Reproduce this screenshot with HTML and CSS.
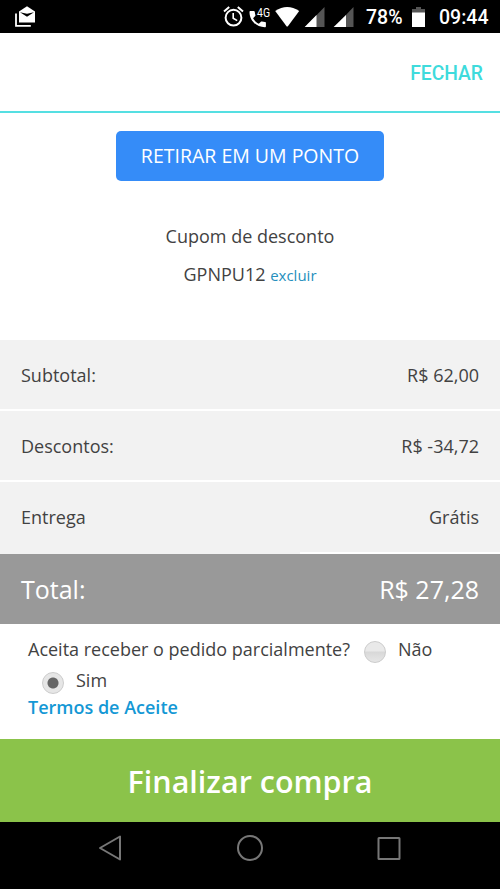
FILE: index.html
```html
<!DOCTYPE html>
<html lang="pt-BR">
<head>
<meta charset="utf-8">
<title>Carrinho</title>
<link rel="stylesheet" href="styles.css">
</head>
<body>
<div class="status">
  <svg class="mail" width="22" height="22" viewBox="0 0 22 22"><path d="M2 7.500v12.300h14.800" fill="none" stroke="#fff" stroke-width="1.800"/><path fill="#fff" d="M5 5.600L13 .2l8 5.400V16.500H5z"/><path d="M6 6.200L13 7.800l7-1.600-7 4.600z" fill="#000"/></svg>
  <svg class="signals" width="132" height="24" viewBox="0 0 132 24">
    <g fill="none" stroke="#fff" stroke-width="2"><circle cx="10.5" cy="13.7" r="7.900"/><path d="M10.2 9v5.200l4 2.400" stroke-width="1.600"/><path d="M1 7.500l5.200-4.400M14.800 3.100l5.200 4.400"/></g>
    <path fill="#fff" d="M27.500 7h3.300c.500 0 .9.400 1 .9.100 1.100.300 2.200.600 3.200.1.400 0 .700-.2 1l-2.100 2.100c1.400 2.500 3.100 4.300 5.700 5.600l2.100-2.100c.300-.3.700-.4 1.100-.2 1 .3 1.900.500 2.900.500.600 0 1 .4 1 1v3.200c0 .6-.4 1-1 1C33.200 23.200 26.500 16.500 26.500 8c0-.6.4-1 1-1z"/>
    <text class="net" x="34" y="13" textLength="13" lengthAdjust="spacingAndGlyphs">4G</text>
    <path fill="#fff" d="M52.200 7Q64.200-1 76.200 7L64.700 22.600h-1z"/>
    <path fill="#555" d="M101.500 3v20H82z"/><path fill="#fff" d="M93.500 11v12H81.700z"/>
    <path fill="#555" d="M130.500 3v20h-19z"/><path fill="#fff" d="M123 11v12h-12.300z"/>
  </svg>
  <span class="pct">78%</span>
  <svg class="battery" width="13" height="20" viewBox="0 0 13 20"><path fill="#555" d="M4 0h5v2h4v5H0V2h4z"/><path fill="#fff" d="M0 5.500h13V20H0z"/></svg>
  <span class="clock">09:44</span>
</div>
<header class="header"><span class="close">FECHAR</span></header>
<main>
  <section class="delivery">
    <div class="pickup"><span class="pickup-label">RETIRAR EM UM PONTO</span></div>
    <p class="coupon">Cupom de desconto</p>
    <p class="code">GPNPU12 <a class="remove">excluir</a></p>
  </section>
  <section class="summary">
    <div class="row"><span>Subtotal:</span><span>R$ 62,00</span></div>
    <div class="row"><span>Descontos:</span><span>R$ -34,72</span></div>
    <div class="row last"><span>Entrega</span><span>Grátis</span></div>
    <div class="total"><span>Total:</span><span>R$ 27,28</span></div>
  </section>
  <section class="accept">
    <div class="line"><span>Aceita receber o pedido parcialmente?</span><i class="radio"></i><span>Não</span></div>
    <div class="line second"><i class="radio on"></i><span>Sim</span></div>
    <a class="terms">Termos de Aceite</a>
  </section>
  <div class="finish"><span>Finalizar compra</span></div>
</main>
<nav class="nav">
  <svg width="24" height="28" viewBox="0 0 24 28"><path d="M22 2.500v23L2 14z" fill="none" stroke="#777" stroke-width="2" stroke-linejoin="round"/></svg>
  <svg width="28" height="28" viewBox="0 0 28 28"><circle cx="14" cy="14" r="12" fill="none" stroke="#777" stroke-width="2"/></svg>
  <svg width="24" height="28" viewBox="0 0 24 28"><rect x="1.500" y="4" width="21" height="21" rx=".5" fill="none" stroke="#777" stroke-width="2"/></svg>
</nav>
</body>
</html>
```
FILE: styles.css
```css
* { box-sizing: border-box; }
body { margin: 0; width: 500px; height: 889px; background: #fff; color: #424242; font: 18px/26px "Open Sans", sans-serif; overflow: hidden; }
p { margin: 0; }
svg { display: block; flex: none; }
.status { height: 33px; background: #000; display: flex; align-items: flex-start; color: #fff; font: 500 19.5px/35px Roboto, sans-serif; }
.mail { margin: 6px 0 0 14px; }
.signals { margin: 4px 0 0 187px; }
.net { font: 12px Roboto, sans-serif; fill: #fff; }
.pct { width: 38px; margin-left: 11px; }
.battery { margin: 7px 0 0 8px; }
.clock { margin-left: 14px; white-space: nowrap; }
.header { height: 80px; border-bottom: 2px solid #55dfe2; display: flex; justify-content: flex-end; align-items: center; padding: 3px 17px 0 0; font: 500 19.3px/26px Roboto, sans-serif; color: #3edbdc; }
.delivery { height: 227px; padding-top: 18px; text-align: center; }
.pickup { width: 268px; height: 50px; margin: 0 auto; border-radius: 5px; background: #358cf8; color: #fff; font-size: 19.5px; line-height: 50px; }
.coupon { margin-top: 42px; }
.code { margin-top: 12px; }
.remove { font-size: 15px; color: #268fbd; }
.row { height: 71px; background: #f2f2f2; border-bottom: 2px solid #fff; display: flex; justify-content: space-between; align-items: center; padding: 0 21px; }
.last { height: 72px; border-image: linear-gradient(to right, #f2f2f2 60%, #fff 60%) 2; }
.total { height: 70px; background: #999; color: #fff; display: flex; justify-content: space-between; align-items: center; padding: 0 21px; font-size: 25px; }
.accept { height: 115px; padding: 11px 28px 0; }
.line { display: flex; align-items: center; height: 28px; }
.radio { width: 22px; height: 22px; margin: 6px 12px 0 14px; flex: none; border-radius: 50%; border: 1px solid #ccc; background: linear-gradient(#e9e9e9 45%, #d8d8d8 50%, #e6e6e6); }
.on { background: radial-gradient(circle, #666 0 5px, #e6e6e6 6px); }
.second { margin-top: 3px; }
.terms { display: block; color: #1498d5; font-weight: 600; }
.finish { height: 83px; background: #8bc34a; color: #fff; text-align: center; font-size: 30.5px; line-height: 84px; font-weight: 600; }
.nav { height: 67px; background: #000; display: flex; justify-content: space-between; padding: 12px 99px 0 98px; }
```
